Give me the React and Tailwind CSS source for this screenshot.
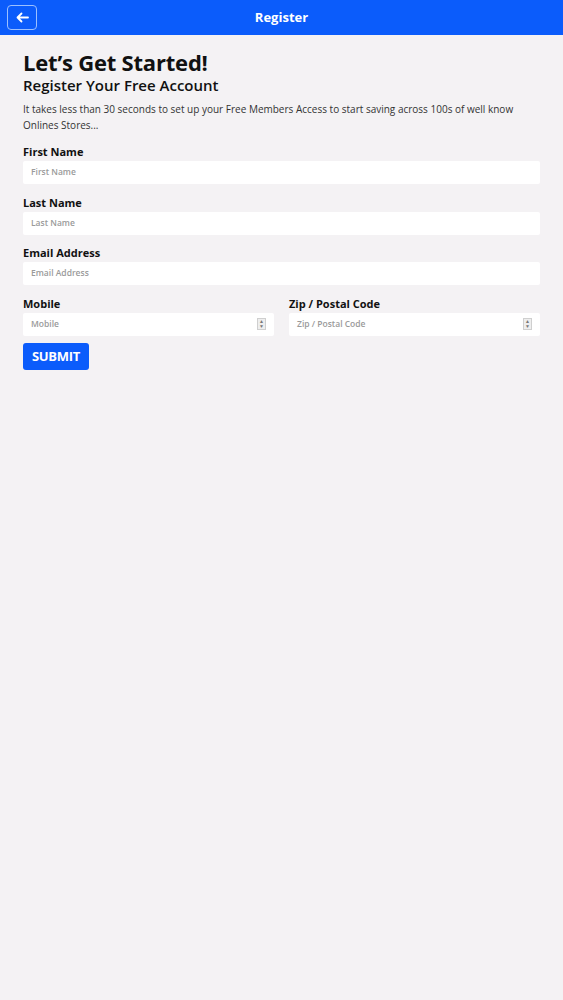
import React from 'react';

const Field = ({ label, placeholder, spinner }) => (
  <div className="flex flex-col">
    <label className="text-[11px] font-bold text-[#111] leading-[14px] mb-[2px]">{label}</label>
    <div className="h-[23px] bg-white rounded-[2px] flex items-center pl-[8px] pr-[8px]">
      <span className="flex-1 text-[8.5px] font-semibold text-[#9a9a9a]">{placeholder}</span>
      {spinner && (
        <span className="flex flex-col items-center justify-center w-[9px] h-[12px] border border-[#cfcfcf] bg-[#eee] text-[5px] leading-[5px] text-[#777]">
          <span>▲</span>
          <span>▼</span>
        </span>
      )}
    </div>
  </div>
);

const App = () => {
  return (
    <div className="min-h-[1000px] w-full bg-[#f4f2f4] font-['Open_Sans',sans-serif]">
      <header className="h-[35px] bg-[#0b5cfb] flex items-center relative">
        <button className="absolute left-[7px] top-[5px] w-[30px] h-[25px] border-[1.5px] border-[#9cc0ff] rounded-[4px] flex items-center justify-center text-white">
          <svg width="13" height="11" viewBox="0 0 13 11" fill="none" stroke="white" strokeWidth="1.8" strokeLinecap="round" strokeLinejoin="round">
            <path d="M12 5.5H1.5M5.5 1.5L1.5 5.5L5.5 9.5" />
          </svg>
        </button>
        <h1 className="flex-1 text-center text-white text-[13px] font-bold">Register</h1>
      </header>

      <main className="px-[23px] pt-[14px]">
        <h2 className="text-[22px] font-bold text-[#111] leading-[26px] tracking-[-0.2px]">Let’s Get Started!</h2>
        <h3 className="text-[15px] font-semibold text-[#111] leading-[20px]">Register Your Free Account</h3>
        <p className="mt-[6px] text-[10px] text-[#333] leading-[16px]">
          It takes less than 30 seconds to set up your Free Members Access to start saving across 100s of well know Onlines Stores...
        </p>

        <div className="mt-[12px] flex flex-col gap-[11.5px]">
          <Field label="First Name" placeholder="First Name" />
          <Field label="Last Name" placeholder="Last Name" />
          <Field label="Email Address" placeholder="Email Address" />
          <div className="grid grid-cols-2 gap-[15px]">
            <Field label="Mobile" placeholder="Mobile" spinner />
            <Field label="Zip / Postal Code" placeholder="Zip / Postal Code" spinner />
          </div>
        </div>

        <button className="mt-[7.5px] h-[27px] w-[66px] bg-[#0b5cfb] rounded-[3px] text-white text-[13px] font-bold tracking-[-0.3px]">
          SUBMIT
        </button>
      </main>
    </div>
  );
};

export default App;
